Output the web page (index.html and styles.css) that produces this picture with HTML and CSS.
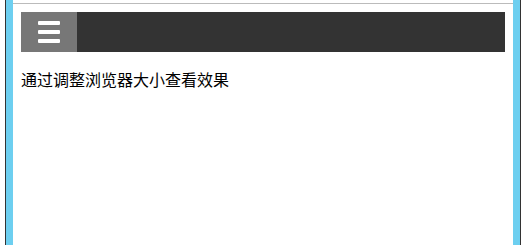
FILE: index.html
```html
<!DOCTYPE html>
<html lang="zh">
<head>
<meta charset="utf-8">
<link rel="stylesheet" href="styles.css">
</head>
<body>
<div class="device">
  <div class="screen">
    <div class="page">
      <div class="navbar">
        <div class="menu-btn">
          <span class="bar"></span>
          <span class="bar"></span>
          <span class="bar"></span>
        </div>
      </div>
      <p class="hint">通过调整浏览器大小查看效果</p>
    </div>
  </div>
</div>
</body>
</html>
```

FILE: styles.css
```css
html, body {
  margin: 0;
  padding: 0;
  background: #ffffff;
  height: 100%;
}
body {
  overflow: hidden;
  font-family: "Noto Sans CJK SC", "Noto Sans", sans-serif;
}
.device {
  margin-left: 5px;
  width: 500px;
  height: 245px;
  border-left: 1px solid #333333;
  border-right: 1px solid #333333;
  background: #6dcff0;
  padding: 0 7px;
  box-sizing: content-box;
  display: flex;
}
.screen {
  flex: 1;
  background: #ffffff;
  padding-top: 3px;
}
.page {
  border-top: 1px solid #bbbbbb;
  padding: 8px;
  height: 100%;
  box-sizing: border-box;
}
.navbar {
  height: 40px;
  background: #333333;
  display: flex;
}
.menu-btn {
  width: 56px;
  background: #777777;
  display: flex;
  flex-direction: column;
  align-items: center;
  justify-content: center;
  gap: 5px;
}
.bar {
  display: block;
  width: 22px;
  height: 4px;
  background: #ffffff;
  border-radius: 1px;
}
.hint {
  margin: 16px 0 0;
  font-size: 16px;
  line-height: 22px;
  color: #000000;
}
```
